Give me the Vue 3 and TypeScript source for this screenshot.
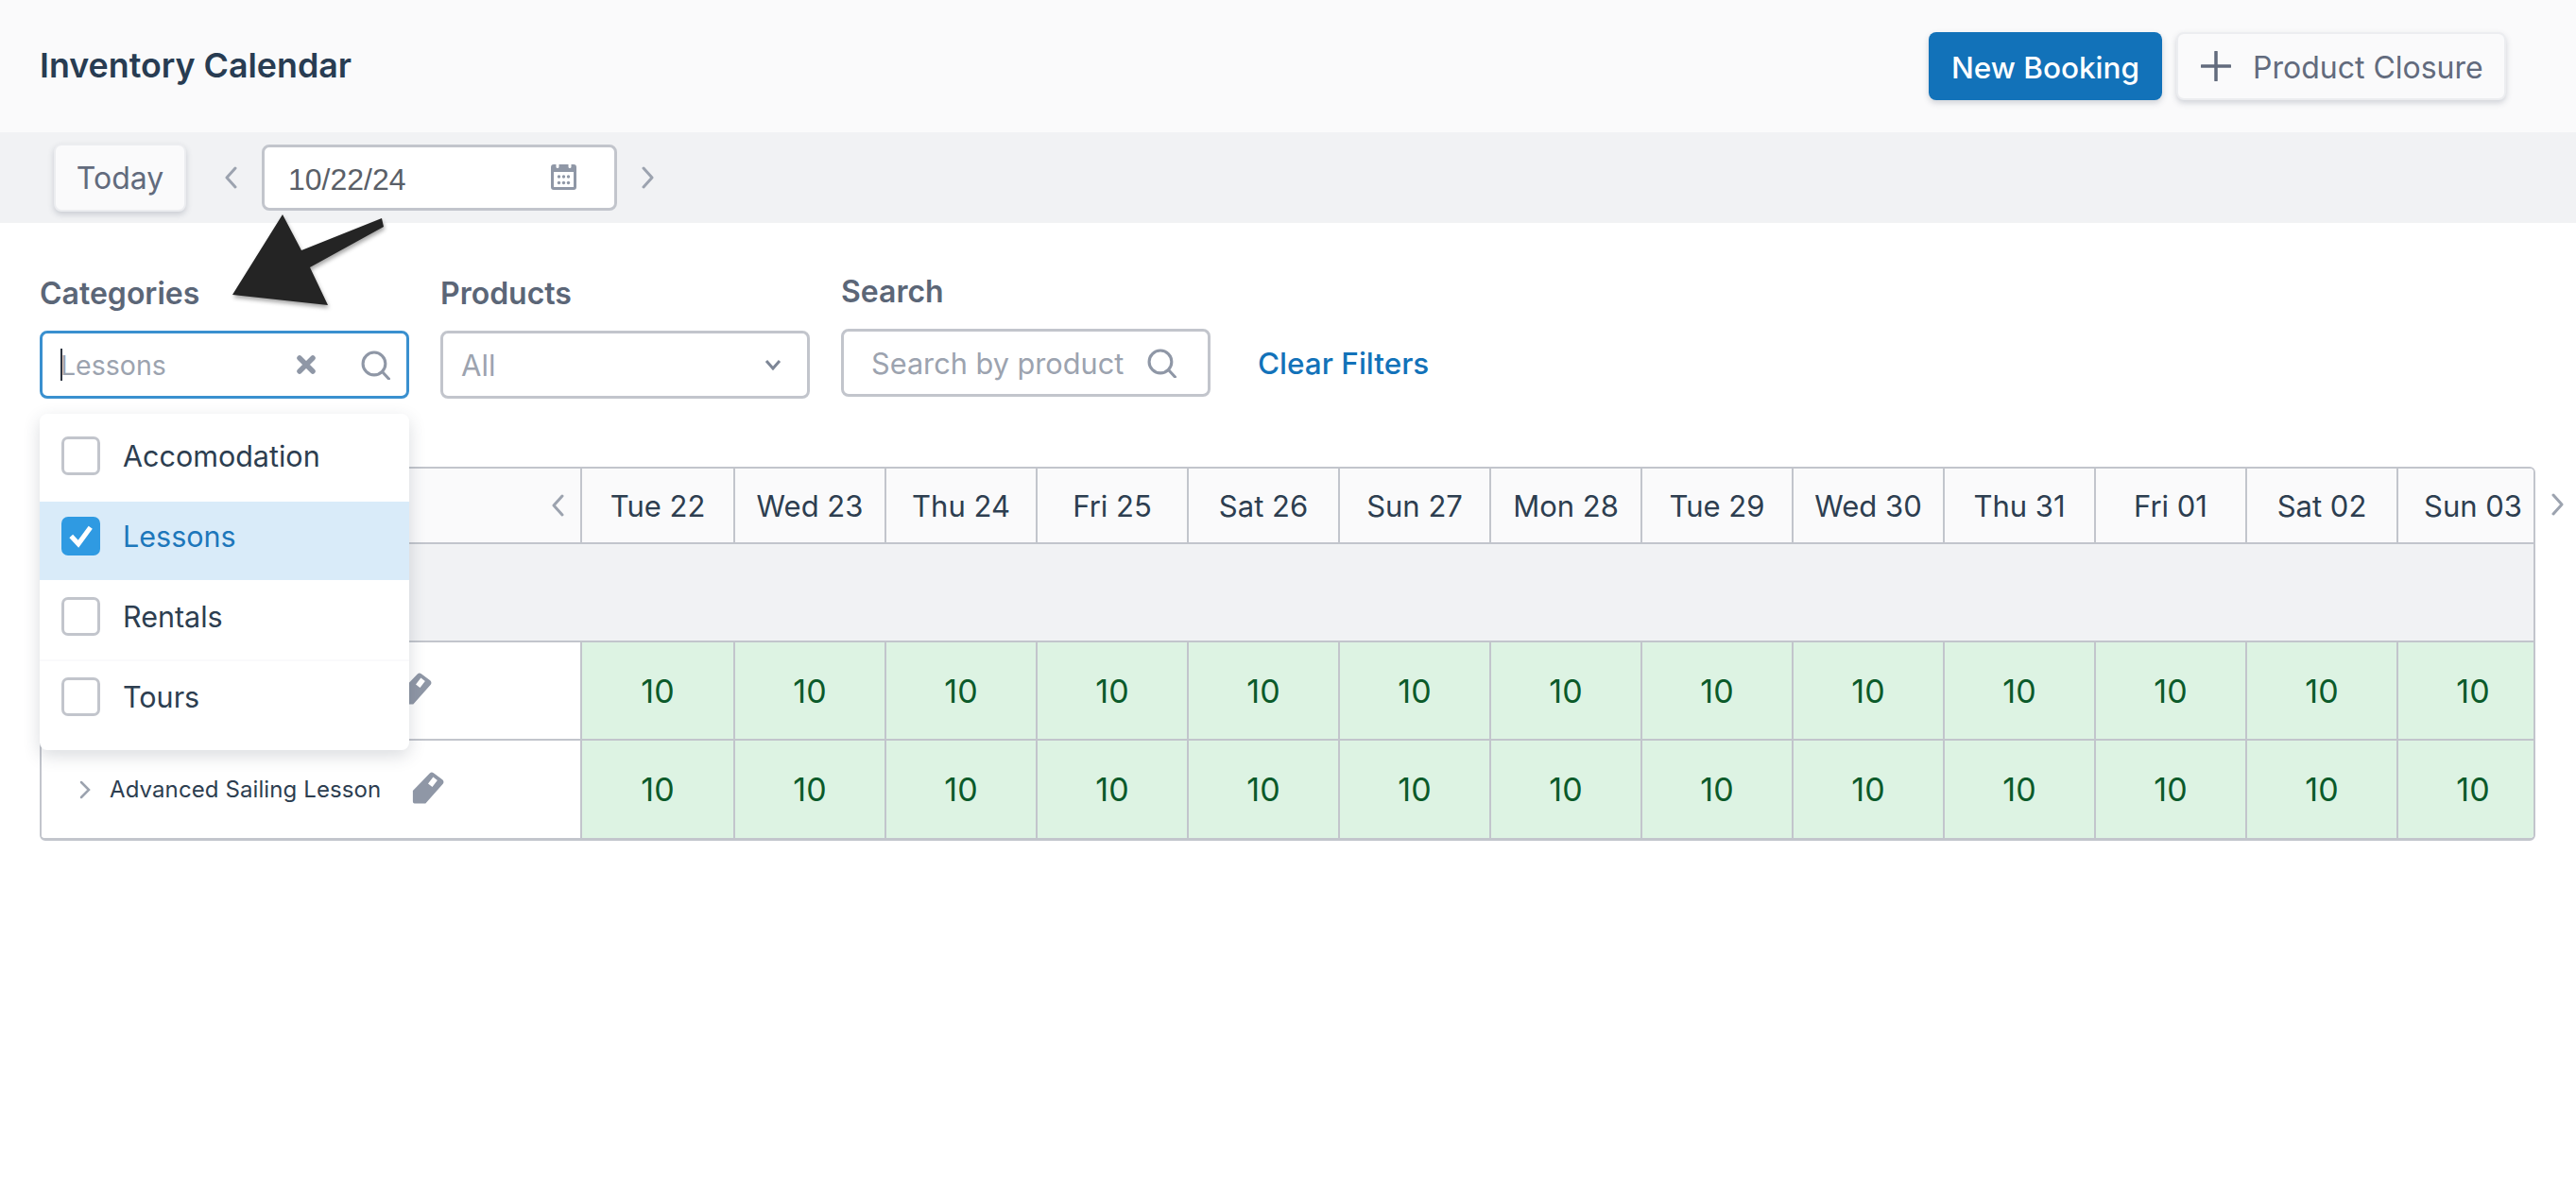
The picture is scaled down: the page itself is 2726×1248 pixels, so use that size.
<script setup lang="ts">
const days = ['Tue 22', 'Wed 23', 'Thu 24', 'Fri 25', 'Sat 26', 'Sun 27', 'Mon 28', 'Tue 29', 'Wed 30', 'Thu 31', 'Fri 01', 'Sat 02', 'Sun 03'];
// the first product's name sits behind the open menu, so only its width matters
const products = ['', 'Advanced Sailing Lesson'];
const categories = [
  { name: 'Accomodation', checked: false },
  { name: 'Lessons', checked: true },
  { name: 'Rentals', checked: false },
  { name: 'Tours', checked: false },
];
</script>

<template>
  <div class="page">
    <header class="header">
      <h1 class="title">Inventory Calendar</h1>
      <div class="actions">
        <button type="button" class="btn primary">New Booking</button>
        <button type="button" class="btn plain">
          <svg class="plus" viewBox="0 0 32 32"><path d="M16 1v30M1 16h30" /></svg>
          Product Closure
        </button>
      </div>
    </header>

    <div class="toolbar">
      <button type="button" class="today">Today</button>
      <svg class="nav" viewBox="0 0 14 24"><path d="M12 2 3 12l9 10" /></svg>
      <div class="date">
        <span>10/22/24</span>
        <svg class="cal" viewBox="0 0 27 27">
          <path fill-rule="evenodd" d="M3 0h2.500v2.500a1.500 1.500 0 0 0 3 0V0h10v2.500a1.500 1.500 0 0 0 3 0V0H24a3 3 0 0 1 3 3v21a3 3 0 0 1-3 3H3a3 3 0 0 1-3-3V3a3 3 0 0 1 3-3zM3 8v16h21V8z" />
          <circle cx="8.500" cy="13" r="1.700" /><circle cx="13.500" cy="13" r="1.700" /><circle cx="18.500" cy="13" r="1.700" />
          <circle cx="8.500" cy="19.500" r="1.700" /><circle cx="13.500" cy="19.500" r="1.700" /><circle cx="18.500" cy="19.500" r="1.700" />
        </svg>
      </div>
      <svg class="nav next" viewBox="0 0 14 24"><path d="m2 2 9 10-9 10" /></svg>
    </div>

    <section class="filters">
      <div class="field">
        <label>Categories</label>
        <div class="control focused">
          <span class="caret"></span>
          <span class="muted small">Lessons</span>
          <svg class="clear" viewBox="0 0 20 20"><path d="m3 3 14 14M17 3 3 17" /></svg>
          <svg class="search" viewBox="0 0 30 30"><circle cx="13.500" cy="13.500" r="11.500" /><path d="m22 22 6.500 7" /></svg>
        </div>
        <ul class="menu">
          <li v-for="c in categories" :key="c.name" :class="{ selected: c.checked }">
            <span class="box">
              <svg v-if="c.checked" viewBox="0 0 40 40"><path d="m10 20 7.500 8L30 11" /></svg>
            </span>
            {{ c.name }}
          </li>
        </ul>
      </div>
      <div class="field">
        <label>Products</label>
        <div class="control select">
          <span class="muted">All</span>
          <svg class="down" viewBox="0 0 18 12"><path d="m2 2 7 8 7-8" /></svg>
        </div>
      </div>
      <div class="field raised">
        <label>Search</label>
        <div class="control search-box">
          <span class="muted tight">Search by product</span>
          <svg class="search" viewBox="0 0 30 30"><circle cx="13.500" cy="13.500" r="11.500" /><path d="m22 22 6.500 7" /></svg>
        </div>
      </div>
      <a class="clear-link">Clear Filters</a>
    </section>

    <div class="table-wrap">
      <div class="table">
        <div class="row head">
          <div class="name">
            <svg class="nav prev" viewBox="0 0 14 24"><path d="M12 2 3 12l9 10" /></svg>
          </div>
          <div v-for="d in days" :key="d" class="cell">{{ d }}</div>
        </div>
        <div class="row group"></div>
        <div v-for="p in products" :key="p" class="row item">
          <div class="name">
            <svg class="expand" viewBox="0 0 12 20"><path d="m2 2 8 8-8 8" /></svg>
            <span class="product">{{ p }}</span>
            <svg class="pencil" viewBox="0 0 38 34" preserveAspectRatio="none">
              <path fill-rule="evenodd" d="M21 1.500c1.500-1.200 3-1.200 4.500-.3l10.500 7c1.500 1 1.800 2.800.8 4.300L16 33.500H3a2 2 0 0 1-2-2V20zM25 5.500l-6 7 5 3.500 6-7z" />
            </svg>
          </div>
          <div v-for="d in days" :key="d" class="cell stock">10</div>
        </div>
      </div>
      <svg class="nav after" viewBox="0 0 14 24"><path d="m2 2 9 10-9 10" /></svg>
    </div>

    <svg class="arrow" viewBox="0 0 180 120" aria-hidden="true">
      <path d="M58 4 78 42 163 8 165 17 87 60 106 100 5 89z" />
    </svg>
  </div>
</template>

<style scoped>
.page {
  position: relative;
  width: 2726px;
  min-height: 1248px;
  background: #fff;
  font-family: Inter, 'Noto Sans', sans-serif;
  color: #2d3e50;
}
.header {
  height: 140px;
  box-sizing: border-box;
  padding: 0 74px 0 42px;
  display: flex;
  align-items: center;
  justify-content: space-between;
  background: #fafafb;
}
.title {
  margin: 0 0 2px;
  font-size: 35.800px;
  font-weight: 600;
  color: #283c52;
}
.actions {
  display: flex;
  gap: 15px;
}
.btn {
  height: 72px;
  box-sizing: border-box;
  display: flex;
  align-items: center;
  border-radius: 8px;
  padding-top: 4px;
  font: 500 31.500px Inter, sans-serif;
  box-shadow: 0 3px 6px rgba(60, 70, 90, 0.22);
}
.primary {
  width: 247px;
  justify-content: center;
  border: 0;
  background: #1272b9;
  color: #fff;
}
.plain {
  width: 349px;
  padding-left: 24px;
  gap: 23px;
  border: 2px solid #ecedf0;
  background: #fafafb;
  color: #626b7d;
  font-weight: 400;
  font-size: 32px;
}
.plus {
  width: 32px;
  height: 32px;
  margin-top: -4px;
  flex: none;
  fill: none;
  stroke: #626b7d;
  stroke-width: 3.500;
  stroke-linecap: round;
}
.toolbar {
  height: 96px;
  padding-left: 57px;
  display: flex;
  align-items: center;
  background: #f1f2f4;
}
.today {
  width: 140px;
  height: 72px;
  border: 2px solid #ecedf0;
  border-radius: 8px;
  background: #fafafb;
  color: #626b7d;
  font: 400 32px Inter, sans-serif;
  box-shadow: 0 3px 6px rgba(60, 70, 90, 0.22);
}
.nav {
  width: 14px;
  height: 24px;
  fill: none;
  stroke: #9ca3af;
  stroke-width: 3;
  stroke-linecap: round;
  stroke-linejoin: round;
}
.toolbar > .nav {
  margin: 0 26px 0 40px;
}
.toolbar > .nav.next {
  margin: 0 0 0 26px;
}
.date {
  width: 376px;
  height: 70px;
  box-sizing: border-box;
  padding: 0 40px 0 25px;
  display: flex;
  align-items: center;
  justify-content: space-between;
  border: 3px solid #c2c5cc;
  border-radius: 8px;
  background: #fff;
  color: #5a5f68;
  font: 400 32px 'Liberation Sans', sans-serif;
}
.date span {
  margin-top: 5px;
}
.cal {
  width: 27px;
  height: 27px;
  margin-top: -2px;
  fill: #8f97a6;
}
.filters {
  padding: 56px 0 0 42px;
  display: flex;
  align-items: flex-start;
  gap: 33px;
}
.field {
  position: relative;
  width: 391px;
}
.field.raised {
  margin-top: -2px;
}
.field label {
  display: block;
  height: 38px;
  line-height: 38px;
  margin-bottom: 20px;
  font-size: 32px;
  font-weight: 600;
  color: #5b6677;
}
.control {
  height: 72px;
  box-sizing: border-box;
  padding: 0 19px;
  display: flex;
  align-items: center;
  border: 3px solid #c2c5cc;
  border-radius: 8px;
  background: #fff;
}
.control.focused {
  border-color: #3a90cf;
}
.muted {
  flex: 1;
  font-size: 31px;
  color: #9ca3af;
}
.muted.small {
  font-size: 28.500px;
}
.muted.tight {
  font-size: 30.700px;
}
.caret {
  width: 2px;
  height: 34px;
  margin-right: -2px;
  background: #2d3440;
}
.clear {
  width: 20px;
  height: 20px;
  margin-right: 48px;
  fill: none;
  stroke: #8f97a6;
  stroke-width: 5.500;
  stroke-linecap: round;
}
.search {
  width: 31px;
  height: 31px;
  flex: none;
  fill: none;
  stroke: #8f97a6;
  stroke-width: 3;
  stroke-linecap: round;
}
.focused .search {
  margin-right: -2px;
}
.down {
  width: 18px;
  height: 12px;
  margin-right: 8px;
  fill: none;
  stroke: #7d8696;
  stroke-width: 3;
}
.search-box {
  padding-left: 29px;
  padding-right: 33px;
}
.clear-link {
  margin: 74px 0 0 17px;
  color: #1272b9;
  font-size: 31.500px;
  font-weight: 500;
  line-height: 38px;
}
.menu {
  position: absolute;
  z-index: 2;
  left: 0;
  top: 146px;
  width: 391px;
  height: 356px;
  box-sizing: border-box;
  margin: 0;
  padding: 0;
  list-style: none;
  border-radius: 8px;
  background: #fff;
  box-shadow: 0 6px 18px rgba(50, 60, 80, 0.18);
}
.menu li {
  height: 85px;
  box-sizing: border-box;
  padding: 0 0 10px 23px;
  display: flex;
  align-items: center;
  gap: 24px;
  font-size: 30.500px;
  color: #2d3e50;
}
.menu li:first-child {
  height: 93px;
  padding-bottom: 5px;
}
.menu li.selected {
  height: 83px;
  background: #d9ebf9;
  color: #1d77bb;
}
.menu li:nth-child(3) {
  height: 86px;
  padding-bottom: 8px;
  border-bottom: 2px solid #fafafb;
}
.box {
  width: 41px;
  height: 41px;
  box-sizing: border-box;
  flex: none;
  border: 3px solid #c2c5cc;
  border-radius: 7px;
  background: #fff;
}
.selected .box {
  border: 0;
  background: #2f9ae2;
}
.box svg {
  display: block;
  width: 41px;
  height: 41px;
  fill: none;
  stroke: #fff;
  stroke-width: 5;
}
.table-wrap {
  position: relative;
  margin: 72px 0 0 42px;
  width: 2641px;
}
.table {
  box-sizing: border-box;
  width: 2641px;
  border: 2px solid #c2c5cc;
  border-bottom-width: 3px;
  border-radius: 6px;
  overflow: hidden;
}
.row {
  display: flex;
  height: 104px;
  border-bottom: 2px solid #c2c5cc;
  box-sizing: border-box;
}
.row:last-child {
  height: 103px;
  border-bottom: 0;
}
.head {
  height: 80px;
  background: #fafafb;
}
.group {
  background: #f1f2f4;
}
.name {
  position: relative;
  flex: none;
  width: 570px;
  padding-left: 40px;
  box-sizing: border-box;
  display: flex;
  align-items: center;
  background: #fff;
}
.head .name {
  justify-content: flex-end;
  padding-right: 17px;
  background: #fafafb;
}
.cell {
  flex: none;
  width: 160px;
  box-sizing: border-box;
  display: flex;
  align-items: center;
  justify-content: center;
  border-left: 2px solid #c2c5cc;
  font-size: 31px;
}
.name + .cell {
  width: 162px;
}
.stock {
  background: #ddf3e3;
  color: #0b5a2a;
  font-size: 34px;
}
.expand {
  width: 12px;
  height: 20px;
  fill: none;
  stroke: #9ca3af;
  stroke-width: 2.500;
  stroke-linecap: round;
}
.product {
  min-width: 274px;
  margin-left: 20px;
  font-size: 24px;
  letter-spacing: 0.1px;
  color: #2d3e50;
}
.pencil {
  width: 34px;
  height: 34px;
  margin-left: 33px;
  margin-top: -4px;
  fill: #8f97a6;
}
.nav.after {
  position: absolute;
  right: -31px;
  top: 28px;
}
.arrow {
  position: absolute;
  left: 241px;
  top: 223px;
  width: 180px;
  height: 120px;
  fill: #242424;
  filter: drop-shadow(1px 3px 2px rgba(0, 0, 0, 0.35));
}
</style>
